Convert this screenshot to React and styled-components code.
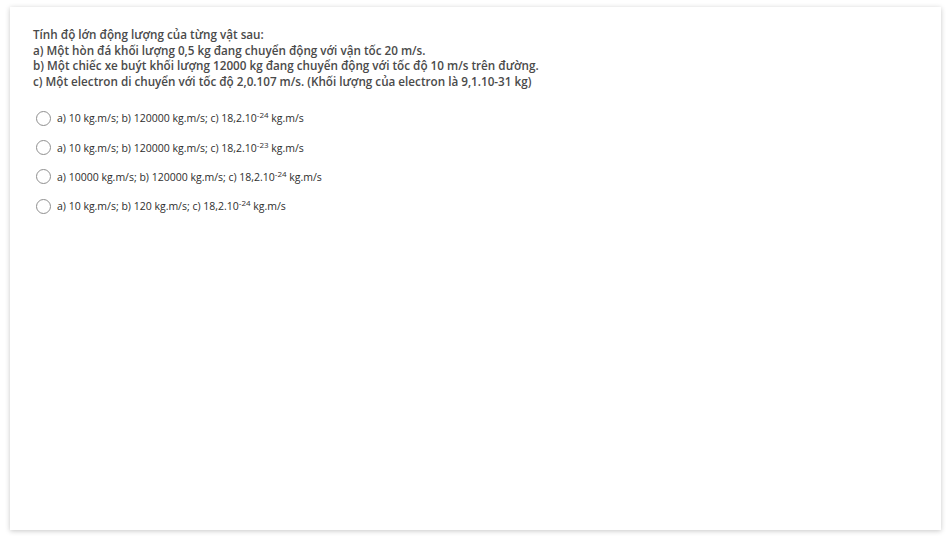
import React from "react";
import styled, { createGlobalStyle } from "styled-components";

const Global = createGlobalStyle`
  html, body { margin: 0; padding: 0; background: #fff; }
  body { font-family: "Open Sans", "Noto Sans", sans-serif; }
`;

const Page = styled.div`
  padding: 7px 10px 13px 10px;
  height: 543px;
  box-sizing: border-box;
`;

const Card = styled.div`
  background: #fff;
  height: 523px;
  box-sizing: border-box;
  box-shadow: 0 1px 5px rgba(0, 0, 0, 0.22);
  padding: 20px 23px;
`;

const Question = styled.div`
  font-size: 11.7px;
  line-height: 15.6px;
  font-weight: 600;
  color: #4a4a4a;
  margin-bottom: 20px;
`;

const Options = styled.div`
  display: flex;
  flex-direction: column;
  gap: 11.3px;
  padding-left: 2.5px;
`;

const Option = styled.label`
  display: flex;
  align-items: center;
  gap: 6.5px;
  height: 18px;
  font-size: 10.5px;
  color: #2e2e2e;
`;

const Radio = styled.span`
  width: 15px;
  height: 15px;
  border-radius: 50%;
  border: 1.3px solid #8f8f8f;
  box-sizing: border-box;
  flex: none;
`;

const Sup = styled.sup`
  font-size: 8px;
  line-height: 0;
  vertical-align: 4px;
`;

const opts = [
  ["a) 10 kg.m/s; b) 120000 kg.m/s; c) 18,2.10", "-24", " kg.m/s"],
  ["a) 10 kg.m/s; b) 120000 kg.m/s; c) 18,2.10", "-23", " kg.m/s"],
  ["a) 10000 kg.m/s; b) 120000 kg.m/s; c) 18,2.10", "-24", " kg.m/s"],
  ["a) 10 kg.m/s; b) 120 kg.m/s; c) 18,2.10", "-24", " kg.m/s"],
];

export default function App() {
  return (
    <Page>
      <Global />
      <Card>
        <Question>
          Tính độ lớn động lượng của từng vật sau:
          <br />
          a) Một hòn đá khối lượng 0,5 kg đang chuyển động với vận tốc 20 m/s.
          <br />
          b) Một chiếc xe buýt khối lượng 12000 kg đang chuyển động với tốc độ 10 m/s trên đường.
          <br />
          c) Một electron di chuyển với tốc độ 2,0.107 m/s. (Khối lượng của electron là 9,1.10-31 kg)
        </Question>
        <Options>
          {opts.map((o, i) => (
            <Option key={i}>
              <Radio />
              <span>
                {o[0]}
                <Sup>{o[1]}</Sup>
                {o[2]}
              </span>
            </Option>
          ))}
        </Options>
      </Card>
    </Page>
  );
}
